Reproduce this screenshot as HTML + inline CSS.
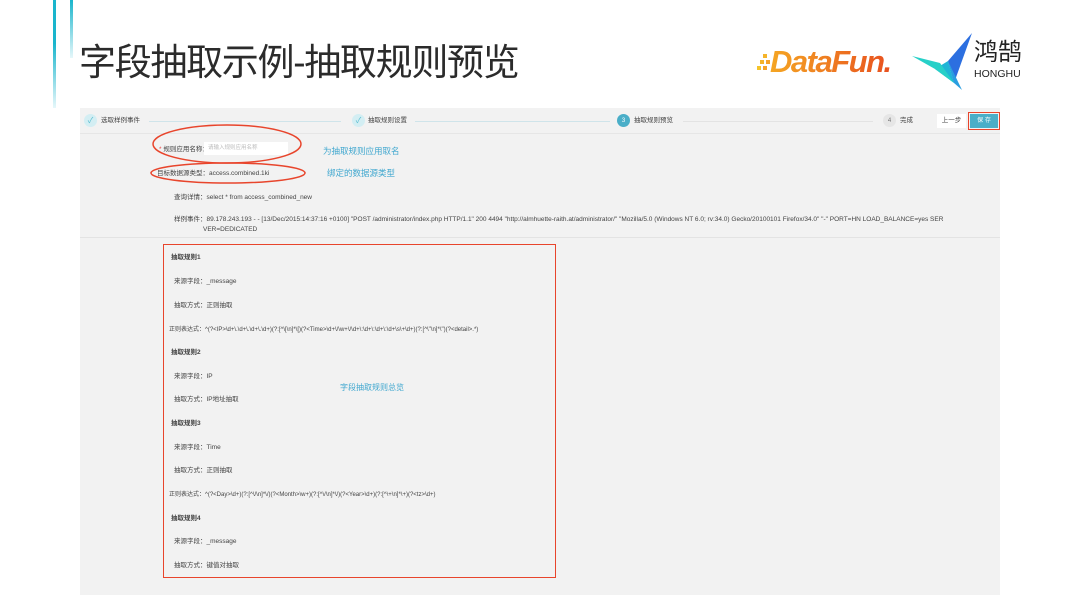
<!DOCTYPE html>
<html><head><meta charset="utf-8"><style>
*{margin:0;padding:0;box-sizing:border-box}
body{width:1080px;height:608px;background:#fff;position:relative;overflow:hidden;font-family:"Liberation Sans","Noto Sans CJK SC",sans-serif;color:#333;line-height:1}
.a{position:absolute;white-space:nowrap}
.s{font-size:6.5px;color:#444}
.b{font-weight:bold}
.cy{color:#3fa7cf}
.c{width:13px;height:13px;border-radius:50%;display:flex;align-items:center;justify-content:center}
</style></head><body>
<div class="a" style="left:53px;top:0;width:3px;height:108px;background:linear-gradient(#1ab5cc,#1ab5cc 40%,#e6f7fa)"></div>
<div class="a" style="left:70px;top:0;width:3px;height:58px;background:linear-gradient(#1ab5cc,#e6f7fa)"></div>
<div class="a" style="left:79px;top:44px;font-size:37px;color:#2b2b2b;letter-spacing:-1.3px">字段抽取示例-抽取规则预览</div>
<div class="a" style="left:757px;top:48px;width:14px;height:28px">
<div class="a" style="left:6px;top:6px;width:4px;height:4px;background:#f5b42a"></div>
<div class="a" style="left:3px;top:12px;width:4px;height:4px;background:#f5b42a"></div>
<div class="a" style="left:9px;top:12px;width:4px;height:4px;background:#f5a22a"></div>
<div class="a" style="left:0;top:18px;width:4px;height:4px;background:#f5c42a"></div>
<div class="a" style="left:6px;top:18px;width:4px;height:4px;background:#f5a22a"></div>
</div>
<div class="a" style="left:770px;top:46px;font-size:31px;font-weight:bold;font-style:italic;background:linear-gradient(90deg,#f5a623,#e8501f);-webkit-background-clip:text;color:transparent;letter-spacing:-1.5px">DataFun.</div>
<svg class="a" style="left:910px;top:33px" width="66" height="58" viewBox="0 0 66 58">
<polygon points="62,0 38,28 44,50" fill="#2c6fe0"/>
<polygon points="38,28 44,50 25,36" fill="#1fb5d6"/>
<polygon points="2,23 25,36 44,50 30,30" fill="#27d0c8"/>
<polygon points="44,50 52,57 38,28" fill="#2a9ee0"/>
</svg>
<div class="a" style="left:974px;top:41px;font-size:24px;color:#222">鸿鹄</div>
<div class="a" style="left:974px;top:69px;font-size:10.5px;color:#222">HONGHU</div>

<div class="a" style="left:80px;top:108px;width:920px;height:487px;background:#f2f2f2"></div>
<div class="a" style="left:80px;top:133px;width:920px;height:1px;background:#e6e6e6"></div>
<div class="a c" style="left:84px;top:114px;background:#d3eef3;color:#5bbdd0;font-size:8px">✓</div>
<div class="a s" style="left:101px;top:118px">选取样例事件</div>
<div class="a" style="left:149px;top:121px;width:192px;height:1px;background:#cfe4ea"></div>
<div class="a c" style="left:352px;top:114px;background:#d3eef3;color:#5bbdd0;font-size:8px">✓</div>
<div class="a s" style="left:368px;top:118px">抽取规则设置</div>
<div class="a" style="left:415px;top:121px;width:195px;height:1px;background:#cfe4ea"></div>
<div class="a c" style="left:617px;top:114px;background:#4aaec8;color:#fff;font-size:6px">3</div>
<div class="a s" style="left:634px;top:118px">抽取规则预览</div>
<div class="a" style="left:683px;top:121px;width:190px;height:1px;background:#e3e3e3"></div>
<div class="a c" style="left:883px;top:114px;background:#e6e6e6;color:#777;font-size:6px">4</div>
<div class="a s" style="left:900px;top:118px">完成</div>
<div class="a s" style="left:937px;top:114px;width:29px;height:14px;background:#fff;display:flex;align-items:center;justify-content:center">上一步</div>
<div class="a" style="left:968px;top:112px;width:32px;height:18px;border:1.5px solid #e8452c;padding:1px"><div style="width:100%;height:100%;background:#4aaec8;color:#fff;font-size:6px;display:flex;align-items:center;justify-content:center">保 存</div></div>

<div class="a s" style="left:159px;top:147px"><span style="color:#e44">*</span> 规则应用名称：</div>
<div class="a" style="left:204px;top:142px;width:84px;height:13px;background:#fff;font-size:5.5px;color:#bbb;padding:4px 4px">请输入规则应用名称</div>
<svg class="a" style="left:148px;top:124px" width="160" height="64"><ellipse cx="79" cy="20" rx="74" ry="19" fill="none" stroke="#e8452c" stroke-width="1.5"/><ellipse cx="80" cy="49" rx="77" ry="10" fill="none" stroke="#e8452c" stroke-width="1.5"/></svg>
<div class="a cy" style="left:323px;top:147px;font-size:8.5px">为抽取规则应用取名</div>
<div class="a s" style="left:157px;top:171px">目标数据源类型：access.combined.1ki</div>
<div class="a cy" style="left:327px;top:169px;font-size:8.5px">绑定的数据源类型</div>
<div class="a s" style="left:174px;top:195px">查询详情：select * from access_combined_new</div>
<div class="a s" style="left:174px;top:215px;line-height:10px">样例事件：89.178.243.193 - - [13/Dec/2015:14:37:16 +0100] "POST /administrator/index.php HTTP/1.1" 200 4494 "http://almhuette-raith.at/administrator/" "Mozilla/5.0 (Windows NT 6.0; rv:34.0) Gecko/20100101 Firefox/34.0" "-" PORT=HN LOAD_BALANCE=yes SER<br><span style="padding-left:29px">VER=DEDICATED</span></div>
<div class="a" style="left:80px;top:237px;width:920px;height:1px;background:#e3e3e3"></div>

<div class="a" style="left:163px;top:244px;width:393px;height:334px;border:1.5px solid #e8452c"></div>
<div class="a s b" style="left:171px;top:255px">抽取规则1</div>
<div class="a s" style="left:174px;top:279px">来源字段：_message</div>
<div class="a s" style="left:174px;top:303px">抽取方式：正则抽取</div>
<div class="a s" style="left:169px;top:327px;font-size:6px">正则表达式：^(?&lt;IP&gt;\d+\.\d+\.\d+\.\d+)(?:[^\[\n]*\[)(?&lt;Time&gt;\d+\/\w+\/\d+\:\d+\:\d+\:\d+\s\+\d+)(?:[^\"\n]*\")(?&lt;detail&gt;.*)</div>
<div class="a s b" style="left:171px;top:350px">抽取规则2</div>
<div class="a s" style="left:174px;top:374px">来源字段：IP</div>
<div class="a cy" style="left:340px;top:384px;font-size:8px">字段抽取规则总览</div>
<div class="a s" style="left:174px;top:397px">抽取方式：IP地址抽取</div>
<div class="a s b" style="left:171px;top:421px">抽取规则3</div>
<div class="a s" style="left:174px;top:445px">来源字段：Time</div>
<div class="a s" style="left:174px;top:468px">抽取方式：正则抽取</div>
<div class="a s" style="left:169px;top:492px;font-size:6px">正则表达式：^(?&lt;Day&gt;\d+)(?:[^\/\n]*\/)(?&lt;Month&gt;\w+)(?:[^\/\n]*\/)(?&lt;Year&gt;\d+)(?:[^\+\n]*\+)(?&lt;tz&gt;\d+)</div>
<div class="a s b" style="left:171px;top:516px">抽取规则4</div>
<div class="a s" style="left:174px;top:539px">来源字段：_message</div>
<div class="a s" style="left:174px;top:563px">抽取方式：键值对抽取</div>
</body></html>
